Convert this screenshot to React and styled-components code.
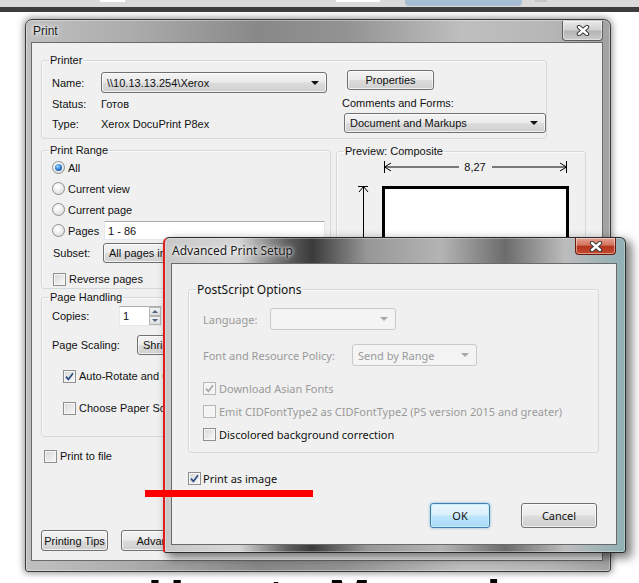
import React from "react";
import styled, { createGlobalStyle, css } from "styled-components";

const GlobalStyle = createGlobalStyle`
  html, body { margin: 0; padding: 0; background: #fff; }
  body {
    width: 639px;
    height: 583px;
    overflow: hidden;
    font-family: "Liberation Sans", Arial, sans-serif;
  }
  * { box-sizing: border-box; }
`;

const Desktop = styled.div`
  width: 639px;
  height: 583px;
  overflow: hidden;
  display: flex;
  flex-direction: column;
  background: #fff;
`;

const TopStrip = styled.div`
  height: 12px;
  flex-shrink: 0;
  display: flex;
  align-items: flex-start;
  background: #dadada;
  border-bottom: 5px solid #3d3d3d;
`;

const StripPiece = styled.div`
  margin-left: ${(p) => p.$gap}px;
  width: ${(p) => p.$w}px;
  height: ${(p) => p.$h}px;
  background: ${(p) => p.$bg};
  border-radius: 0 0 ${(p) => p.$r || 0}px ${(p) => p.$r || 0}px;
`;

const Stage = styled.div`
  position: relative;
  height: 555px;
  flex-shrink: 0;
`;

const ManualTitle = styled.div`
  margin-top: 6px;
  margin-left: 148px;
  font: bold 50px/50px "Liberation Sans", Arial, sans-serif;
  color: #000;
  white-space: nowrap;
`;

/* ---------- windows ---------- */

const PrintWindow = styled.div`
  position: absolute;
  left: 25px;
  top: 7px;
  width: 586px;
  height: 553px;
  display: flex;
  flex-direction: column;
  padding: 0 7px 10px 5px;
  border: 1px solid #3a3a3a;
  border-radius: 7px 7px 3px 3px;
  background: linear-gradient(
    90deg,
    #c0c0c0 0%,
    #acacac 18%,
    #888888 40%,
    #939393 55%,
    #bfbfbf 75%,
    #b6b6b6 90%,
    #a2a2a2 100%
  );
  box-shadow: 0 0 7px 1px rgba(0, 0, 0, 0.45), inset 0 0 0 1px rgba(255, 255, 255, 0.35);
`;

const AdvWindow = styled.div`
  position: absolute;
  left: 163px;
  top: 225px;
  width: 463px;
  height: 316px;
  display: flex;
  flex-direction: column;
  padding: 0 8px 7px 6px;
  border: 1px solid #2a2a2a;
  border-left: 2px solid #e01b1b;
  border-radius: 6px 6px 3px 3px;
  background: linear-gradient(
    90deg,
    #c8c8c8 0%,
    #d6d6d6 16%,
    #5c5c5c 27%,
    #3b3b3b 32%,
    #979797 44%,
    #b4b4b4 60%,
    #6c6c6c 74%,
    #bcbcbc 87%,
    #8fb0b4 100%
  );
  box-shadow: 5px 4px 10px 1px rgba(0, 0, 0, 0.5), inset 0 0 0 1px rgba(255, 255, 255, 0.3);
`;

const TitleBar = styled.div`
  height: ${(p) => p.$h}px;
  flex-shrink: 0;
  display: flex;
  align-items: center;
`;

const TitleText = styled.span`
  padding-left: ${(p) => p.$pad}px;
  font-size: 12px;
  color: #1b1b1b;
  font-family: ${(p) => (p.$vista ? '"Noto Sans", sans-serif' : '"Liberation Sans", Arial, sans-serif')};
  text-shadow: 0 0 6px #fff, 0 0 3px #fff;
`;

const CloseButton = styled.div`
  align-self: flex-start;
  margin-left: auto;
  margin-top: ${(p) => p.$top}px;
  margin-right: ${(p) => p.$right}px;
  width: 41px;
  height: ${(p) => p.$h}px;
  display: flex;
  align-items: center;
  justify-content: center;
  border: 1px solid ${(p) => (p.$red ? "#6b1a10" : "#5d5d5d")};
  border-top: none;
  border-radius: 0 0 4px 4px;
  background: ${(p) =>
    p.$red
      ? "linear-gradient(#e3a391 0%, #d3715b 45%, #b5361e 52%, #c24a2d 100%)"
      : "linear-gradient(#eaeaea 0%, #cfcfcf 48%, #b4b4b4 52%, #cacaca 100%)"};
  box-shadow: inset 0 0 0 1px rgba(255, 255, 255, 0.45);
`;

const CloseGlyph = () => (
  <svg width="14" height="11" viewBox="0 0 14 11">
    <path d="M3 2 L11 9 M11 2 L3 9" stroke="#3a3a3a" strokeWidth="4.4" strokeLinecap="round" />
    <path d="M3 2 L11 9 M11 2 L3 9" stroke="#fff" strokeWidth="2.4" strokeLinecap="round" />
  </svg>
);

const Client = styled.div`
  flex: 1;
  display: flex;
  flex-direction: column;
  background: #f0f0f0;
  border: 1px solid #6a6a6a;
  padding: ${(p) => p.$pad};
  font-size: 11px;
  color: #111;
  font-family: ${(p) => (p.$vista ? '"Noto Sans", sans-serif' : '"Liberation Sans", Arial, sans-serif')};
`;

/* ---------- group boxes ---------- */

const Group = styled.div`
  position: relative;
  width: ${(p) => p.$w}px;
  height: ${(p) => (p.$h ? `${p.$h}px` : "auto")};
  margin-top: ${(p) => p.$mt || 0}px;
  padding: ${(p) => p.$pad};
  border: 1px solid #d3dadf;
  border-radius: 3px;
  box-shadow: inset 1px 1px 0 #fafafa;
`;

const Legend = styled.span`
  position: absolute;
  top: -8px;
  left: 7px;
  padding: 0 1px;
  line-height: 15px;
  background: #f0f0f0;
  color: #111;
  font-size: ${(p) => (p.$vista ? 12 : 11)}px;
`;

/* ---------- rows & labels ---------- */

const Row = styled.div`
  display: flex;
  align-items: center;
  height: ${(p) => p.$h || 21}px;
  margin-top: ${(p) => p.$mt || 0}px;
  margin-left: ${(p) => p.$ml || 0}px;
  gap: ${(p) => (p.$gap === undefined ? 3 : p.$gap)}px;
`;

const Label = styled.span`
  width: ${(p) => (p.$w ? `${p.$w}px` : "auto")};
  flex-shrink: 0;
  padding-left: ${(p) => p.$pl || 0}px;
  white-space: nowrap;
  color: ${(p) => (p.$disabled ? "#9a9a9a" : "inherit")};
`;

const RadioLabel = styled.span`
  width: ${(p) => (p.$w ? `${p.$w}px` : "auto")};
  display: flex;
  align-items: center;
  gap: 3px;
  white-space: nowrap;
`;

const Radio = styled.span`
  width: 13px;
  height: 13px;
  flex-shrink: 0;
  border-radius: 50%;
  border: 1px solid #8e8f8f;
  background: radial-gradient(circle at 40% 35%, #ffffff 10%, #d8d8d8 90%);
  display: flex;
  align-items: center;
  justify-content: center;
  ${(p) =>
    p.$on &&
    css`
      &::after {
        content: "";
        width: 7px;
        height: 7px;
        border-radius: 50%;
        background: radial-gradient(circle at 40% 35%, #a9dcff 0%, #2b7bd0 50%, #0d4b8f 100%);
      }
    `}
`;

const CheckBox = styled.span`
  width: 13px;
  height: 13px;
  flex-shrink: 0;
  border: 1px solid ${(p) => (p.$disabled ? "#b6b6b6" : "#8e8f8f")};
  background: ${(p) => (p.$disabled ? "#f4f4f4" : "linear-gradient(135deg, #d6d6d6, #fafafa)")};
  box-shadow: inset 0 0 0 1px #f6f6f6;
  display: flex;
  align-items: center;
  justify-content: center;
`;

const Check = ({ on, disabled }) => (
  <CheckBox $disabled={disabled}>
    {on && (
      <svg width="9" height="9" viewBox="0 0 9 9">
        <path
          d="M1 4.6 L3.4 7.4 L8 1.2"
          fill="none"
          stroke={disabled ? "#a8a8a8" : "#2b4c86"}
          strokeWidth="1.7"
        />
      </svg>
    )}
  </CheckBox>
);

/* ---------- controls ---------- */

const buttonFace = css`
  border: 1px solid #707070;
  border-radius: 3px;
  background: linear-gradient(#f3f3f3 0%, #ebebeb 48%, #dcdcdc 52%, #cfcfcf 100%);
  box-shadow: inset 0 0 0 1px rgba(255, 255, 255, 0.7);
`;

const Button = styled.div`
  width: ${(p) => p.$w}px;
  height: ${(p) => p.$h}px;
  margin-left: ${(p) => p.$ml || 0}px;
  flex-shrink: 0;
  display: flex;
  align-items: center;
  justify-content: center;
  white-space: nowrap;
  overflow: hidden;
  color: #111;
  ${buttonFace}
  ${(p) =>
    p.$default &&
    css`
      border-color: #3c7fb1;
      background: linear-gradient(#eaf6fd 0%, #d9f0fc 48%, #bee6fd 52%, #a7d9f5 100%);
      box-shadow: inset 0 0 0 1px #c9ecff, 0 0 3px rgba(60, 140, 200, 0.6);
    `}
`;

const Combo = styled.div`
  width: ${(p) => p.$w}px;
  height: ${(p) => p.$h || 20}px;
  margin-left: ${(p) => p.$ml || 0}px;
  flex-shrink: 0;
  display: flex;
  align-items: center;
  padding: 0 7px 0 5px;
  white-space: nowrap;
  overflow: hidden;
  ${(p) =>
    p.$disabled
      ? css`
          border: 1px solid #c9c9c9;
          border-radius: 3px;
          background: #f4f4f4;
          color: #9a9a9a;
        `
      : buttonFace}
`;

const ComboText = styled.span`
  flex: 1;
  overflow: hidden;
`;

const ComboArrow = styled.span`
  width: 0;
  height: 0;
  border-left: 4px solid transparent;
  border-right: 4px solid transparent;
  border-top: 4px solid ${(p) => (p.$disabled ? "#a8a8a8" : "#111")};
`;

const TextBox = styled.div`
  width: ${(p) => p.$w}px;
  height: ${(p) => p.$h || 20}px;
  flex-shrink: 0;
  display: flex;
  align-items: center;
  padding-left: 3px;
  background: #fff;
  border: 1px solid #e3e9ef;
  border-top-color: #abadb3;
  white-space: nowrap;
`;

const SpinBox = styled(TextBox)`
  padding-left: 0;
  span {
    flex: 1;
    padding-left: 3px;
  }
`;

const SpinButtons = styled.div`
  width: 12px;
  height: 100%;
  display: flex;
  flex-direction: column;
`;

const SpinHalf = styled.div`
  flex: 1;
  display: flex;
  align-items: center;
  justify-content: center;
  border: 1px solid #b5b5b5;
  background: linear-gradient(#f4f4f4, #dedede);
  &::after {
    content: "";
    border-left: 3px solid transparent;
    border-right: 3px solid transparent;
    ${(p) => (p.$up ? "border-bottom: 3px solid #4d6185;" : "border-top: 3px solid #4d6185;")}
  }
`;

/* ---------- print dialog layout ---------- */

const PrinterContent = styled.div`
  display: flex;
  align-items: flex-start;
`;

const InfoGrid = styled.div`
  display: grid;
  grid-template-columns: 49px 226px;
  grid-template-rows: 21px 22px 18px;
  align-items: center;
`;

const RightInfo = styled.div`
  margin-top: -2px;
  margin-left: 15px;
  display: flex;
  flex-direction: column;
`;

const FormLabel = styled.div`
  height: 16px;
  margin-top: 5px;
  margin-bottom: 2px;
  line-height: 16px;
`;

const MainRow = styled.div`
  display: flex;
  align-items: flex-start;
  gap: 5px;
  margin-top: 11px;
`;

const LeftColumn = styled.div`
  width: 290px;
  display: flex;
  flex-direction: column;
`;

const PreviewArt = styled.svg`
  display: block;
`;

const ButtonRow = styled.div`
  margin-top: auto;
  display: flex;
  gap: ${(p) => p.$gap}px;
  justify-content: ${(p) => (p.$end ? "flex-end" : "flex-start")};
  padding-right: ${(p) => p.$pr || 0}px;
`;

const AdvButtonRow = styled(ButtonRow)`
  margin-top: 17px;
`;

const RedMark = styled.div`
  position: absolute;
  left: 145px;
  top: 478px;
  width: 168px;
  height: 7px;
  background: #ff0000;
`;

function PrintDialog() {
  return (
    <PrintWindow>
      <TitleBar $h={22}>
        <TitleText $pad={2}>Print</TitleText>
        <CloseButton $top={1} $right={0} $h={20}>
          <CloseGlyph />
        </CloseButton>
      </TitleBar>
      <Client $pad="17px 0 9px 9px">
        <Group $w={506} $pad="11px 0 5px 10px">
          <Legend>Printer</Legend>
          <PrinterContent>
            <InfoGrid>
              <Label>Name:</Label>
              <Combo $w={226} $h={21}>
                <ComboText>\\10.13.13.254\Xerox</ComboText>
                <ComboArrow />
              </Combo>
              <Label>Status:</Label>
              <Label>Готов</Label>
              <Label>Type:</Label>
              <Label>Xerox DocuPrint P8ex</Label>
            </InfoGrid>
            <RightInfo>
              <Button $w={87} $h={20} $ml={5}>
                Properties
              </Button>
              <FormLabel>Comments and Forms:</FormLabel>
              <Combo $w={202} $ml={2}>
                <ComboText>Document and Markups</ComboText>
                <ComboArrow />
              </Combo>
            </RightInfo>
          </PrinterContent>
        </Group>

        <MainRow>
          <LeftColumn>
            <Group $w={290} $pad="6px 4px 1px 10px">
              <Legend>Print Range</Legend>
              <Row>
                <RadioLabel>
                  <Radio $on />
                  All
                </RadioLabel>
              </Row>
              <Row>
                <RadioLabel>
                  <Radio />
                  Current view
                </RadioLabel>
              </Row>
              <Row>
                <RadioLabel>
                  <Radio />
                  Current page
                </RadioLabel>
              </Row>
              <Row $gap={0}>
                <RadioLabel $w={52}>
                  <Radio />
                  Pages
                </RadioLabel>
                <TextBox $w={221} $h={19}>
                  1 - 86
                </TextBox>
              </Row>
              <Row $h={20} $mt={2} $gap={0}>
                <Label $w={51} $pl={1}>
                  Subset:
                </Label>
                <Combo $w={222}>
                  <ComboText>All pages in</ComboText>
                  <ComboArrow />
                </Combo>
              </Row>
              <Row $h={16} $mt={8} $ml={1}>
                <Check />
                <span>Reverse pages</span>
              </Row>
            </Group>

            <Group $w={290} $mt={8} $pad="8px 4px 20px 10px">
              <Legend>Page Handling</Legend>
              <Row $h={20} $gap={0}>
                <Label $w={67}>Copies:</Label>
                <SpinBox $w={43}>
                  <span>1</span>
                  <SpinButtons>
                    <SpinHalf $up />
                    <SpinHalf />
                  </SpinButtons>
                </SpinBox>
              </Row>
              <Row $h={20} $mt={9} $gap={0}>
                <Label $w={85}>Page Scaling:</Label>
                <Combo $w={188}>
                  <ComboText>Shrink</ComboText>
                  <ComboArrow />
                </Combo>
              </Row>
              <Row $h={16} $mt={13} $ml={11}>
                <Check on />
                <span>Auto-Rotate and Center</span>
              </Row>
              <Row $h={16} $mt={16} $ml={11}>
                <Check />
                <span>Choose Paper Source</span>
              </Row>
            </Group>

            <Row $h={16} $mt={11} $ml={3}>
              <Check />
              <span>Print to file</span>
            </Row>
          </LeftColumn>

          <Group $w={250} $h={290} $mt={1} $pad="0">
            <Legend>Preview: Composite</Legend>
            <PreviewArt width="248" height="288" viewBox="0 0 248 288">
              <g stroke="#000" strokeWidth="1" fill="none">
                <path d="M47.5 9 V21 M47.5 15 H122 M47.5 15 L54 11 M47.5 15 L54 19" />
                <path d="M229.5 9 V21 M155 15 H229.5 M229.5 15 L223 11 M229.5 15 L223 19" />
                <path d="M21 34.5 H31 M26.5 34.5 V288 M26.5 34.5 L22 40 M26.5 34.5 L31 40" />
                <rect x="46.5" y="35.5" width="184" height="250" strokeWidth="3" fill="#fff" />
              </g>
              <text
                x="138"
                y="19"
                textAnchor="middle"
                fontSize="11"
                fontFamily="Liberation Sans, Arial, sans-serif"
                fill="#111"
              >
                8,27
              </text>
            </PreviewArt>
          </Group>
        </MainRow>

        <ButtonRow $gap={13}>
          <Button $w={67} $h={21}>
            Printing Tips
          </Button>
          <Button $w={80} $h={21}>
            Advanced
          </Button>
        </ButtonRow>
      </Client>
    </PrintWindow>
  );
}

function AdvancedDialog() {
  return (
    <AdvWindow>
      <TitleBar $h={25}>
        <TitleText $pad={1} $vista>
          Advanced Print Setup
        </TitleText>
        <CloseButton $red $top={0} $right={1} $h={17}>
          <CloseGlyph />
        </CloseButton>
      </TitleBar>
      <Client $vista $pad="25px 0 16px 16px">
        <Group $w={411} $pad="18px 0 10px 14px">
          <Legend $vista>PostScript Options</Legend>
          <Row $h={22} $gap={0}>
            <Label $w={67} $disabled>
              Language:
            </Label>
            <Combo $w={126} $h={22} $disabled>
              <ComboText />
              <ComboArrow $disabled />
            </Combo>
          </Row>
          <Row $h={22} $mt={14} $gap={0}>
            <Label $w={149} $disabled>
              Font and Resource Policy:
            </Label>
            <Combo $w={125} $h={22} $disabled>
              <ComboText>Send by Range</ComboText>
              <ComboArrow $disabled />
            </Combo>
          </Row>
          <Row $h={16} $mt={14}>
            <Check on disabled />
            <Label $disabled>Download Asian Fonts</Label>
          </Row>
          <Row $h={16} $mt={7}>
            <Check disabled />
            <Label $disabled>Emit CIDFontType2 as CIDFontType2 (PS version 2015 and greater)</Label>
          </Row>
          <Row $h={16} $mt={7}>
            <Check />
            <Label>Discolored background correction</Label>
          </Row>
        </Group>
        <Row $h={16} $mt={17} $gap={2}>
          <Check on />
          <Label>Print as image</Label>
        </Row>
        <AdvButtonRow $gap={31} $end $pr={19}>
          <Button $w={60} $h={25} $default>
            OK
          </Button>
          <Button $w={76} $h={25}>
            Cancel
          </Button>
        </AdvButtonRow>
      </Client>
    </AdvWindow>
  );
}

export default function App() {
  return (
    <Desktop>
      <GlobalStyle />
      <TopStrip>
        <StripPiece $gap={100} $w={25} $h={2} $bg="#ffffff" />
        <StripPiece $gap={211} $w={44} $h={2} $bg="#ffffff" />
        <StripPiece $gap={25} $w={117} $h={6} $r={4} $bg="#a6bdd2" />
        <StripPiece $gap={13} $w={12} $h={2} $bg="#c6c6c6" />
      </TopStrip>
      <Stage>
        <PrintDialog />
        <AdvancedDialog />
        <RedMark />
      </Stage>
      <ManualTitle>How to Manual</ManualTitle>
    </Desktop>
  );
}
